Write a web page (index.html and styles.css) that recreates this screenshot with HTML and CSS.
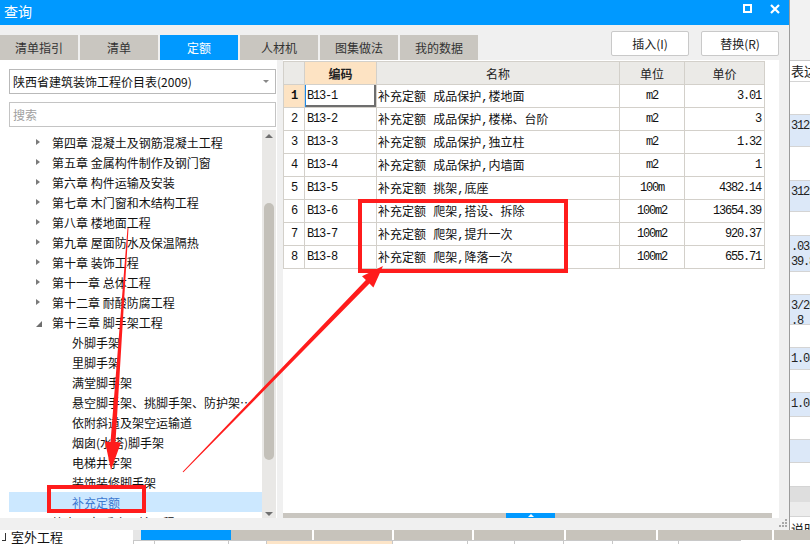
FILE: index.html
```html
<!DOCTYPE html>
<html lang="zh-CN">
<head>
<meta charset="utf-8">
<title>查询</title>
<link rel="stylesheet" href="styles.css">
</head>
<body>
<div class="bgapp">
  <div class="bg-main">
    <div class="bg-col">
      <div class="bc head"></div>
      <div class="bc h21">表达</div>
      <div class="bc h33"></div>
      <div class="bc blue h32">312×</div>
      <div class="bc h34"></div>
      <div class="bc blue h31">312×</div>
      <div class="bc h24"></div>
      <div class="bc blue h36">.03/<br>39.8</div>
      <div class="bc h23"></div>
      <div class="bc blue h30">3/26<br>.8</div>
      <div class="bc h23"></div>
      <div class="bc blue h22">1.03</div>
      <div class="bc h23"></div>
      <div class="bc blue h24">1.03</div>
      <div class="bc h23"></div>
      <div class="bc blue h23"></div>
      <div class="bc h24"></div>
      <div class="bc grey1 h15"></div>
      <div class="bc grey2 h15"></div>
      <div class="bc last">说明</div>
    </div>
  </div>
  <div class="bg-bottom">
    <div class="bb-left"><span class="bb-box"></span>室外工程</div>
    <div class="bb-right">
      <div class="bb-bar">
        <span class="bb-pad"></span>
        <span class="bb-blue"></span>
        <span class="bb-seg s81"></span>
        <span class="bb-seg s80"></span>
        <span class="bb-seg s80"></span>
        <span class="bb-seg s92"></span>
        <span class="bb-seg s92"></span>
        <span class="bb-seg s116"></span>
        <span class="bb-seg s38"></span>
      </div>
      <div class="bb-cells">
        <span class="bb-cell c21"></span>
        <span class="bb-cell c74"></span>
        <span class="bb-cell c38"></span>
        <span class="bb-cell peach c126"></span>
        <span class="bb-cell c75"></span>
        <span class="bb-cell c47"></span>
        <span class="bb-cell c49"></span>
        <span class="bb-cell c49"></span>
        <span class="bb-cell c66"></span>
        <span class="bb-cell c63"></span>
      </div>
    </div>
  </div>
</div>

<div class="dialog">
  <div class="titlebar">
    <span class="title">查询</span>
    <div class="winbtns">
      <span class="wb-max"></span>
      <svg class="wb-close" width="10" height="10" viewBox="0 0 10 10"><path d="M1 1 L9 9 M9 1 L1 9" stroke="#fff" stroke-width="2.2" fill="none"/></svg>
    </div>
  </div>

  <div class="toolbar">
    <div class="tabs">
      <div class="tab">清单指引</div>
      <div class="tab">清单</div>
      <div class="tab active">定额</div>
      <div class="tab">人材机</div>
      <div class="tab">图集做法</div>
      <div class="tab">我的数据</div>
    </div>
    <div class="actions">
      <button class="btn">插入(I)</button>
      <button class="btn">替换(R)</button>
    </div>
  </div>

  <div class="main">
    <div class="left">
      <div class="select">
        <span>陕西省建筑装饰工程价目表(2009)</span>
        <span class="caret"></span>
      </div>
      <div class="search">搜索</div>
      <div class="tree">
        <div class="tree-list">
          <div class="ti ch"><i class="tri"></i>第四章 混凝土及钢筋混凝土工程</div>
          <div class="ti ch"><i class="tri"></i>第五章 金属构件制作及钢门窗</div>
          <div class="ti ch"><i class="tri"></i>第六章 构件运输及安装</div>
          <div class="ti ch"><i class="tri"></i>第七章 木门窗和木结构工程</div>
          <div class="ti ch"><i class="tri"></i>第八章 楼地面工程</div>
          <div class="ti ch"><i class="tri"></i>第九章 屋面防水及保温隔热</div>
          <div class="ti ch"><i class="tri"></i>第十章 装饰工程</div>
          <div class="ti ch"><i class="tri"></i>第十一章 总体工程</div>
          <div class="ti ch"><i class="tri"></i>第十二章 耐酸防腐工程</div>
          <div class="ti ch"><i class="tri open"></i>第十三章 脚手架工程</div>
          <div class="ti leaf">外脚手架</div>
          <div class="ti leaf">里脚手架</div>
          <div class="ti leaf">满堂脚手架</div>
          <div class="ti leaf"><span class="clip">悬空脚手架、挑脚手架、防护架、安全网</span></div>
          <div class="ti leaf">依附斜道及架空运输道</div>
          <div class="ti leaf">烟囱(水塔)脚手架</div>
          <div class="ti leaf">电梯井字架</div>
          <div class="ti leaf">装饰装修脚手架</div>
          <div class="ti leaf sel">补充定额</div>
          <div class="ti ch"><i class="tri"></i>第十四章 垂直运输工程</div>
        </div>
        <div class="vscroll">
          <span class="sa up"></span>
          <span class="sgap"></span>
          <span class="thumb"></span>
          <span class="sfill"></span>
          <span class="sa down"></span>
        </div>
      </div>
    </div>

    <div class="right">
      <table class="grid">
        <colgroup>
          <col class="w-no"><col class="w-code"><col class="w-name"><col class="w-unit"><col class="w-price">
        </colgroup>
        <thead>
          <tr><th></th><th class="hl">编码</th><th>名称</th><th>单位</th><th>单价</th></tr>
        </thead>
        <tbody>
          <tr><td class="no cur">1</td><td class="code focus">B13-1</td><td class="name">补充定额 成品保护,楼地面</td><td class="unit">m2</td><td class="price">3.01</td></tr>
          <tr><td class="no">2</td><td class="code">B13-2</td><td class="name">补充定额 成品保护,楼梯、台阶</td><td class="unit">m2</td><td class="price">3</td></tr>
          <tr><td class="no">3</td><td class="code">B13-3</td><td class="name">补充定额 成品保护,独立柱</td><td class="unit">m2</td><td class="price">1.32</td></tr>
          <tr><td class="no">4</td><td class="code">B13-4</td><td class="name">补充定额 成品保护,内墙面</td><td class="unit">m2</td><td class="price">1</td></tr>
          <tr><td class="no">5</td><td class="code">B13-5</td><td class="name">补充定额 挑架,底座</td><td class="unit">100m</td><td class="price">4382.14</td></tr>
          <tr><td class="no">6</td><td class="code">B13-6</td><td class="name">补充定额 爬架,搭设、拆除</td><td class="unit">100m2</td><td class="price">13654.39</td></tr>
          <tr><td class="no">7</td><td class="code">B13-7</td><td class="name">补充定额 爬架,提升一次</td><td class="unit">100m2</td><td class="price">920.37</td></tr>
          <tr><td class="no">8</td><td class="code">B13-8</td><td class="name">补充定额 爬架,降落一次</td><td class="unit">100m2</td><td class="price">655.71</td></tr>
        </tbody>
      </table>
      <div class="rfill"></div>
      <div class="hbar"><span class="hthumb"><i></i></span></div>
    </div>
  </div>

  <div class="footer">
    <svg class="grip" width="9" height="9" viewBox="0 0 9 9">
      <rect x="7" y="1" width="2" height="2" fill="#a8a8a8"/>
      <rect x="4" y="4" width="2" height="2" fill="#a8a8a8"/>
      <rect x="7" y="4" width="2" height="2" fill="#a8a8a8"/>
      <rect x="1" y="7" width="2" height="2" fill="#a8a8a8"/>
      <rect x="4" y="7" width="2" height="2" fill="#a8a8a8"/>
      <rect x="7" y="7" width="2" height="2" fill="#a8a8a8"/>
    </svg>
  </div>
</div>

<svg class="annot" width="810" height="544" viewBox="0 0 810 544">
  <rect x="360" y="201" width="206" height="70" fill="none" stroke="#ff1c1c" stroke-width="4"/>
  <rect x="49" y="487" width="95" height="24" fill="none" stroke="#ff1c1c" stroke-width="4"/>
  <polygon fill="#ff1c1c" points="127.5,228 128.5,228 115.5,442 121,442.6 111,470 105,441.4 110.5,442"/>
  <polygon fill="#ff1c1c" points="182.6,471.7 365.9,280.1 362,276.2 383,266 373.4,287.4 369.5,283.5 183.4,472.3"/>
</svg>
</body>
</html>
```

FILE: styles.css
```css
* { box-sizing: border-box; margin: 0; padding: 0; }
html, body { width: 810px; height: 544px; overflow: hidden; }
body {
  position: relative;
  background: #fff;
  font-family: "Noto Sans CJK SC", "Noto Sans", sans-serif;
  font-size: 12px;
  color: #1a1a1a;
}

/* ---------- background application (behind the dialog) ---------- */
.bgapp { position: absolute; inset: 0; display: flex; flex-direction: column; }
.bg-main { height: 530px; display: flex; justify-content: flex-end; }
.bg-col {
  width: 21px;
  border-left: 1px solid #9c9c9c;
  display: flex; flex-direction: column;
  font-family: "Liberation Mono", "Noto Sans CJK SC", monospace;
  font-size: 12px; letter-spacing: -1.2px; line-height: 15px;
  color: #222; background: #fff;
  overflow: hidden; white-space: nowrap;
}
.bc { flex: none; border-bottom: 1px solid #d4d4d4; padding: 4px 0 0 1px; }
.bc.head { height: 61px; background: #f2f2f2; border-bottom-color: #c8c8c8; }
.bc.blue { background: #dce8f8; }
.bc.grey1 { background: #dedede; border-bottom: none; }
.bc.grey2 { background: #ececec; }
.bc.last { flex: 1; border-bottom: none; padding-top: 4px; font-family: "Noto Sans CJK SC", sans-serif; letter-spacing: 0; font-size: 13px; }
.h15 { height: 15px; } .h21 { height: 21px; } .h22 { height: 22px; } .h23 { height: 23px; }
.h24 { height: 24px; } .h30 { height: 30px; } .h31 { height: 31px; } .h32 { height: 32px; }
.h33 { height: 33px; } .h34 { height: 34px; } .h36 { height: 36px; }
.bc.h21 { font-family: "Noto Sans CJK SC", sans-serif; letter-spacing: 0; padding-top: 2px; font-size: 13px; }

.bg-bottom { height: 14px; display: flex; background: #fff; }
.bb-left { width: 133px; display: flex; align-items: center; font-size: 13px; line-height: 14px; color: #111; padding-left: 2px; gap: 5px; }
.bb-box { width: 4px; height: 8px; border-right: 1px solid #333; border-bottom: 1px solid #333; }
.bb-right { flex: 1; display: flex; flex-direction: column; }
.bb-bar { height: 10px; display: flex; }
.bb-pad { width: 8px; background: #e6e6e6; }
.bb-blue { width: 90px; background: #0099ff; }
.bb-seg { background: #c7c3bb; border-left: 2px solid #fff; }
.bb-seg.s81 { border-left: none; width: 81px; }
.s80 { width: 80px; } .s92 { width: 92px; } .s116 { width: 116px; } .s38 { width: 38px; }
.bb-cells { flex: 1; display: flex; }
.bb-cell { border-left: 1px solid #c8c8c8; border-top: 1px solid #c8c8c8; background: #fff; }
.bb-cell.peach { background: #fde5c8; }
.c21 { width: 21px; } .c74 { width: 74px; } .c38 { width: 38px; } .c126 { width: 126px; }
.c75 { width: 75px; } .c47 { width: 47px; } .c49 { width: 49px; } .c66 { width: 66px; } .c63 { width: 63px; }

/* ---------- dialog ---------- */
.dialog {
  position: absolute; left: 0; top: 0;
  width: 789px; height: 530px;
  background: #f0f0f0;
  display: flex; flex-direction: column;
}
.titlebar {
  height: 25px; flex: none;
  background: #0099ff; color: #fff;
  display: flex; justify-content: space-between; align-items: flex-start;
  padding: 1px 9px 0 4px;
}
.title { font-size: 14px; line-height: 20px; }
.winbtns { display: flex; gap: 18px; padding-top: 3px; }
.wb-max { width: 9px; height: 9px; border: 2px solid #fff; }
.wb-close { display: block; }

.toolbar { height: 35px; flex: none; display: flex; }
.tabs { display: flex; gap: 2px; margin-top: 10px; }
.tab {
  width: 78px; height: 25px;
  background: #c9c6c0; color: #333;
  text-align: center; line-height: 25px; font-size: 12px;
}
.tab.active { background: #0099ff; color: #fff; }
.actions { margin-left: auto; margin-right: 10px; padding-top: 6px; display: flex; gap: 12px; }
.btn {
  width: 78px; height: 25px;
  background: #fff; border: 1px solid #c9c9c9; border-radius: 2px;
  font-family: "Noto Sans CJK SC", sans-serif; font-size: 12px; color: #222;
}

.main { flex: 1; display: flex; min-height: 0; }

/* left panel */
.left {
  width: 277px; background: #fff;
  padding: 9px 1px 0 9px;
  display: flex; flex-direction: column;
}
.select {
  height: 25px; flex: none;
  border: 1px solid #b9b9b9;
  display: flex; align-items: center; justify-content: space-between;
  padding: 0 6px 0 3px; font-size: 12px; color: #111;
}
.caret { width: 0; height: 0; border-left: 3px solid transparent; border-right: 3px solid transparent; border-top: 3px solid #888; }
.search {
  height: 25px; flex: none; margin-top: 8px;
  border: 1px solid #c4c4c4;
  padding-left: 3px; line-height: 23px; color: #a0a0a0; font-size: 12px;
}
.tree { flex: 1; display: flex; margin-top: 3px; min-height: 0; overflow: hidden; }
.tree-list { flex: 1; padding-top: 2px; overflow: hidden; }
.ti { height: 20px; display: flex; align-items: center; white-space: nowrap; color: #111; font-size: 12px; }
.ti.ch { padding-left: 27px; }
.ti.leaf { padding-left: 63px; }
.ti.sel { background: #cce8ff; color: #3b78d0; }
.clip { display: block; max-width: 187px; flex: none; overflow: hidden; text-overflow: ellipsis; }
.tri {
  width: 0; height: 0; margin-right: 12px;
  border-left: 4px solid #7a7a7a;
  border-top: 3.5px solid transparent; border-bottom: 3.5px solid transparent;
}
.tri.open {
  border-left: 6px solid transparent; border-top: none;
  border-bottom: 6px solid #6e6e6e;
  margin-right: 10px; margin-top: 3px;
}

.vscroll { width: 14px; background: #e9e8e6; display: flex; flex-direction: column; align-items: center; }
.sa { width: 0; height: 0; border-left: 4px solid transparent; border-right: 4px solid transparent; }
.sa.up { border-bottom: 4px solid #707070; margin-top: 4px; }
.sa.down { border-top: 4px solid #707070; margin-bottom: 2px; }
.sgap { height: 65px; flex: none; }
.thumb { width: 10px; height: 257px; flex: none; border-radius: 5px; background: #c3c0b9; }
.sfill { flex: 1; }

/* right panel */
.right {
  width: 496px; margin-left: 6px;
  background: #fff;
  display: flex; flex-direction: column;
}
.grid {
  border-collapse: collapse; table-layout: fixed;
  width: 481px; margin-top: 1px;
}
.w-no { width: 21px; } .w-code { width: 72px; } .w-name { width: 243px; }
.w-unit { width: 65px; } .w-price { width: 80px; }
.grid tr { height: 23px; }
.grid th, .grid td {
  border: 1px solid #d3d0ca;
  white-space: nowrap; overflow: hidden;
  padding: 0;
}
.grid th { background: #ebeae7; font-weight: normal; font-size: 12px; color: #222; text-align: center; }
.grid th.hl { background: #fde3c3; font-weight: bold; }
.grid td {
  font-family: "Liberation Mono", "Noto Sans CJK SC", monospace;
  font-size: 12px; color: #111;
}
.no, .code, .unit, .price { letter-spacing: -1.2px; }
.no { text-align: center; color: #333; }
.no.cur { background: #fde3c3; font-weight: bold; }
.code { padding-left: 2px !important; }
.focus { box-shadow: inset 1px 0 0 #1e8ae6, inset -2px -2px 0 #6e6e6e; }
.name { padding-left: 1px !important; }
.unit { text-align: center; }
.price { text-align: right; padding-right: 3px !important; }
.rfill { flex: 1; }
.hbar { height: 5px; flex: none; background: #c9c6c0; margin-right: 7px; display: flex; }
.hthumb { width: 49px; margin-left: 223px; background: #0099ff; display: flex; justify-content: center; align-items: center; }
.hthumb i { width: 0; height: 0; border-left: 3px solid transparent; border-right: 3px solid transparent; border-bottom: 3px solid #fff; }

.footer { height: 12px; flex: none; display: flex; justify-content: flex-end; align-items: flex-end; padding: 0 2px 3px 0; }
.grip { display: block; }

/* annotation overlay (red marks drawn on top of the screenshot) */
.annot { position: absolute; left: 0; top: 0; pointer-events: none; }
```
